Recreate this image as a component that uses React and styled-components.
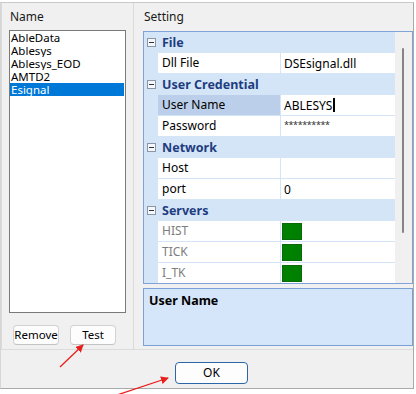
import React from "react";
import styled, { createGlobalStyle } from "styled-components";

const GlobalStyle = createGlobalStyle`
    html, body {
        margin: 0;
        padding: 0;
        background: #ffffff;
    }
    body {
        font-family: "Noto Sans", "Liberation Sans", Arial, sans-serif;
        font-size: 12px;
        color: #000;
    }
`;

const names = ["AbleData", "Ablesys", "Ablesys_EOD", "AMTD2", "Esignal"];

const settings = [
    { type: "cat", title: "File" },
    { type: "item", label: "Dll File", value: "DSEsignal.dll" },
    { type: "cat", title: "User Credential" },
    { type: "item", label: "User Name", value: "ABLESYS", selected: true },
    { type: "item", label: "Password", value: "**********", secret: true },
    { type: "cat", title: "Network" },
    { type: "item", label: "Host", value: "" },
    { type: "item", label: "port", value: "0" },
    { type: "cat", title: "Servers" },
    { type: "item", label: "HIST", swatch: true, readOnly: true },
    { type: "item", label: "TICK", swatch: true, readOnly: true },
    { type: "item", label: "I_TK", swatch: true, readOnly: true },
];

function App() {
    return (
        <>
            <GlobalStyle />
            <Page>
                <Window>
                    <Main>
                        <LeftPanel>
                            <GroupLabel>Name</GroupLabel>
                            <ListBox>
                                {names.map((n) => (
                                    <ListItem key={n} selected={n === "Esignal"}>
                                        {n}
                                    </ListItem>
                                ))}
                            </ListBox>
                            <ButtonRow>
                                <SmallButton>Remove</SmallButton>
                                <SmallButton>Test</SmallButton>
                            </ButtonRow>
                        </LeftPanel>
                        <RightPanel>
                            <GroupLabel>Setting</GroupLabel>
                            <Grid>
                                <Rows>
                                    {settings.map((s, i) =>
                                        s.type === "cat" ? (
                                            <CatRow key={i}>
                                                <Gutter>
                                                    <Toggle />
                                                </Gutter>
                                                <CatTitle>{s.title}</CatTitle>
                                            </CatRow>
                                        ) : (
                                            <ItemRow key={i}>
                                                <Gutter />
                                                <LabelCell
                                                    selected={s.selected}
                                                    readOnly={s.readOnly}
                                                >
                                                    {s.label}
                                                </LabelCell>
                                                <ValueCell>
                                                    {s.swatch ? (
                                                        <Swatch />
                                                    ) : s.secret ? (
                                                        <Secret>{s.value}</Secret>
                                                    ) : (
                                                        s.value
                                                    )}
                                                    {s.selected && <Caret />}
                                                </ValueCell>
                                            </ItemRow>
                                        )
                                    )}
                                </Rows>
                                <ScrollTrack>
                                    <ScrollThumb />
                                </ScrollTrack>
                            </Grid>
                            <Description>User Name</Description>
                        </RightPanel>
                    </Main>
                    <Footer>
                        <OkButton>OK</OkButton>
                    </Footer>
                </Window>
                <Arrows width="416" height="394" viewBox="0 0 416 394">
                    <defs>
                        <marker
                            id="head"
                            markerWidth="8"
                            markerHeight="8"
                            refX="7"
                            refY="4"
                            orient="auto"
                            markerUnits="userSpaceOnUse"
                        >
                            <path d="M0,0 L8,4 L0,8 Z" fill="#e8201c" />
                        </marker>
                    </defs>
                    <line
                        x1="60"
                        y1="367"
                        x2="83"
                        y2="345"
                        stroke="#e8201c"
                        strokeWidth="1.3"
                        markerEnd="url(#head)"
                    />
                    <line
                        x1="114"
                        y1="396"
                        x2="168"
                        y2="378"
                        stroke="#e8201c"
                        strokeWidth="1.3"
                        markerEnd="url(#head)"
                    />
                </Arrows>
            </Page>
        </>
    );
}

export default App;

const Page = styled.div`
    position: relative;
    width: 416px;
    height: 394px;
    overflow: hidden;
`;
const Window = styled.div`
    box-sizing: border-box;
    margin-top: 2px;
    width: 414px;
    height: 387px;
    background: #f0f0f0;
    border-top: 1px solid #c9c9c9;
    border-left: 1px solid #d6d6d6;
    border-right: 1px solid #a9a9a9;
    border-bottom: 1px solid #a9a9a9;
    display: flex;
    flex-direction: column;
`;
const Main = styled.div`
    display: flex;
    height: 347px;
    border-bottom: 1px solid #dcdcdc;
    box-sizing: border-box;
`;
const LeftPanel = styled.div`
    box-sizing: border-box;
    width: 133px;
    border-left: 1px solid #dadada;
    border-right: 1px solid #dadada;
    padding: 7px 0 0 7px;
    display: flex;
    flex-direction: column;
`;
const GroupLabel = styled.div`
    height: 14px;
    line-height: 14px;
    margin-left: 1px;
    color: #1a1a1a;
`;
const ListBox = styled.div`
    box-sizing: border-box;
    margin-top: 6px;
    width: 117px;
    height: 283px;
    background: #fff;
    border: 1px solid #7a7a7a;
`;
const ListItem = styled.div`
    height: 13px;
    line-height: 13px;
    font-size: 11.5px;
    padding-left: 1px;
    margin: 0 1px 0 0;
    overflow: hidden;
    white-space: nowrap;
    background: ${(p) => (p.selected ? "#0078d7" : "transparent")};
    color: ${(p) => (p.selected ? "#fff" : "#000")};
`;
const ButtonRow = styled.div`
    display: flex;
    gap: 11px;
    margin: 12px 0 0 4px;
`;
const SmallButton = styled.div`
    box-sizing: border-box;
    width: 46px;
    height: 20px;
    line-height: 18px;
    font-size: 11.5px;
    text-align: center;
    background: #fdfdfd;
    border: 1px solid #d2d2d2;
    border-bottom-color: #c4c4c4;
    border-radius: 4px;
`;
const RightPanel = styled.div`
    flex: 1;
    padding: 7px 0 0 9px;
    display: flex;
    flex-direction: column;
`;
const Grid = styled.div`
    box-sizing: border-box;
    margin-top: 7px;
    height: 253px;
    border: 1px solid #7fa3d8;
    display: flex;
    overflow: hidden;
`;
const Rows = styled.div`
    flex: 1;
    overflow: hidden;
    background: #fff;
`;
const CatRow = styled.div`
    display: flex;
    height: 21px;
    background: #d5e5f8;
`;
const ItemRow = styled.div`
    display: flex;
    height: 21px;
    box-sizing: border-box;
    border-bottom: 1px solid #d5e5f8;
`;
const Gutter = styled.div`
    width: 14px;
    flex-shrink: 0;
    background: #d5e5f8;
    display: flex;
    align-items: center;
    justify-content: center;
`;
const Toggle = styled.div`
    position: relative;
    box-sizing: border-box;
    width: 9px;
    height: 9px;
    border: 1px solid #8c96a4;
    background: #f4f7fb;
    &::after {
        content: "";
        position: absolute;
        left: 1px;
        top: 3px;
        width: 5px;
        height: 1px;
        background: #333;
    }
`;
const CatTitle = styled.div`
    padding-left: 4px;
    line-height: 21px;
    font-weight: 700;
    font-size: 12.5px;
    color: #1e3d80;
`;
const LabelCell = styled.div`
    width: 122px;
    flex-shrink: 0;
    box-sizing: border-box;
    padding-left: 4px;
    line-height: 20px;
    white-space: nowrap;
    background: ${(p) => (p.selected ? "#bccfea" : "#fff")};
    color: ${(p) => (p.readOnly ? "#7d7d7d" : "#000")};
`;
const ValueCell = styled.div`
    flex: 1;
    display: flex;
    align-items: center;
    padding-left: 3px;
    border-left: 1px solid #d5e5f8;
    white-space: nowrap;
`;
const Secret = styled.span`
    font-size: 9px;
    letter-spacing: -0.4px;
    color: #333;
    margin-top: -3px;
`;
const Caret = styled.span`
    display: inline-block;
    width: 2px;
    height: 14px;
    background: #000;
    margin-left: 1px;
`;
const Swatch = styled.div`
    width: 20px;
    height: 17px;
    margin-left: -2px;
    box-sizing: border-box;
    background: #008000;
    border: 1px solid #0a6a0a;
`;
const ScrollTrack = styled.div`
    width: 17px;
    flex-shrink: 0;
    background: #f0f0f0;
    position: relative;
`;
const ScrollThumb = styled.div`
    position: absolute;
    left: 7px;
    top: 16px;
    width: 2px;
    height: 185px;
    background: #858585;
    border-radius: 1px;
`;
const Description = styled.div`
    box-sizing: border-box;
    margin-top: 4px;
    height: 58px;
    background: #d5e5fa;
    border: 1px solid #7aa0d6;
    padding: 3px 5px;
    font-weight: 700;
    font-size: 12.5px;
`;
const Footer = styled.div`
    flex: 1;
    display: flex;
    padding: 12px 0 0 174px;
`;
const OkButton = styled.div`
    box-sizing: border-box;
    width: 73px;
    height: 22px;
    line-height: 19px;
    text-align: center;
    background: #fdfdfd;
    border: 1.5px solid #2b67a8;
    border-radius: 4px;
`;
const Arrows = styled.svg`
    position: absolute;
    left: 0;
    top: 0;
    pointer-events: none;
`;
